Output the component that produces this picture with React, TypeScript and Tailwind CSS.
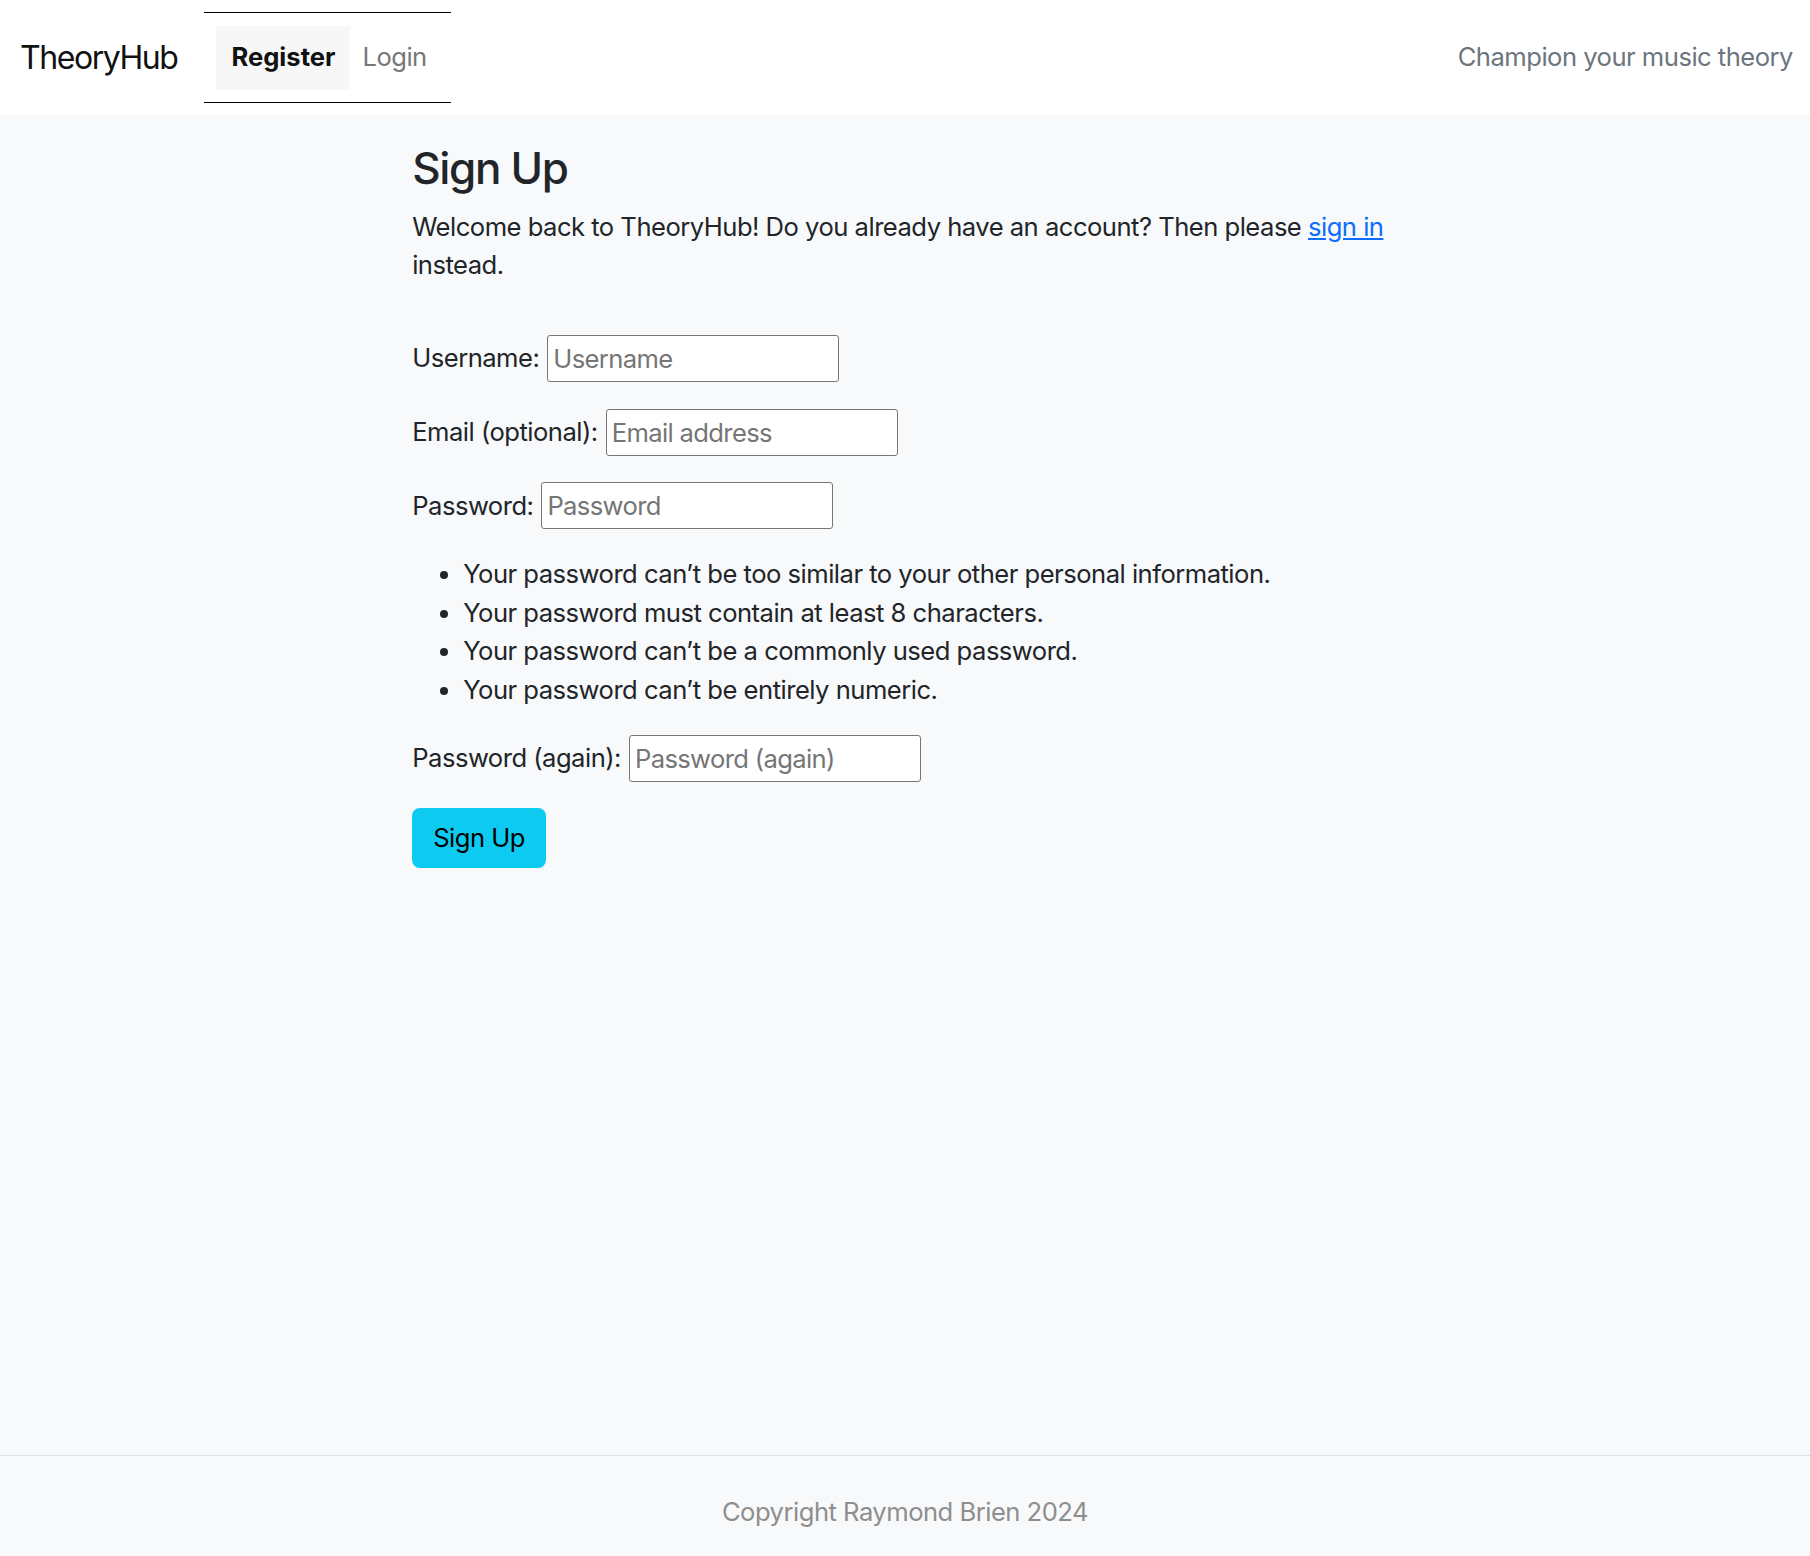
import { useState } from 'react';

const font = { fontFamily: 'Inter, "Noto Sans", sans-serif' };

function Field({ label, placeholder, type = 'text' }: { label: string; placeholder: string; type?: string }) {
  const [value, setValue] = useState('');
  return (
    <p className="mb-[25.6px] flex h-[48px] items-center gap-[8px]">
      <label className="text-[25.6px] leading-[38.4px] text-[#212529]">{label}</label>
      <input
        type={type}
        value={value}
        onChange={(e) => setValue(e.target.value)}
        placeholder={placeholder}
        className="h-[47px] w-[292px] rounded-[3px] border border-[#767676] bg-white px-[5px] text-[25.6px] tracking-[-0.025em] text-[#212529] outline-none placeholder:text-[#757575]"
      />
    </p>
  );
}

const rules = [
  'Your password can’t be too similar to your other personal information.',
  'Your password must contain at least 8 characters.',
  'Your password can’t be a commonly used password.',
  'Your password can’t be entirely numeric.',
];

export default function App() {
  return (
    <div className="flex min-h-screen flex-col bg-[#f8f9fa] tracking-[-0.032em] text-[#212529]" style={font}>
      <header className="flex h-[115px] items-center justify-between bg-white pl-[20px] pr-[17px]">
        <div className="flex items-center">
          <span className="mr-[27px] text-[32px] leading-[48px] tracking-[-0.045em] text-[#111]">TheoryHub</span>
          <nav className="flex h-[91px] items-center border-y border-black px-[12px]">
            <a className="flex h-[64px] items-center bg-[#f7f7f7] px-[15px] text-[25.6px] font-bold tracking-normal text-[#111]">
              Register
            </a>
            <a className="flex h-[64px] items-center px-[12px] text-[25.6px] text-[#777]">Login</a>
          </nav>
        </div>
        <span className="text-[25.6px] text-[#6c757d]">Champion your music theory</span>
      </header>

      <main className="flex-1">
        <div className="mx-auto w-[1536px] px-[19.2px] pt-[27px]">
          <div className="ml-[256px] w-[986px]">
            <h3 className="mb-[12.8px] text-[44px] font-medium leading-[53px] tracking-[-0.03em]">Sign Up</h3>
            <p className="mb-[50px] text-[25.6px] leading-[38.4px]">
              Welcome back to TheoryHub! Do you already have an account? Then please{' '}
              <a href="#" className="text-[#0d6efd] underline">
                sign in
              </a>{' '}
              instead.
            </p>
            <form onSubmit={(e) => e.preventDefault()}>
              <Field label="Username:" placeholder="Username" />
              <Field label="Email (optional):" placeholder="Email address" type="email" />
              <Field label="Password:" placeholder="Password" type="password" />
              <ul className="mb-[25.6px] list-disc pl-[51px] text-[25.6px] leading-[38.4px]">
                {rules.map((r) => (
                  <li key={r}>{r}</li>
                ))}
              </ul>
              <Field label="Password (again):" placeholder="Password (again)" type="password" />
              <button
                type="submit"
                className="h-[60px] rounded-[8px] bg-[#0dcaf0] px-[21px] text-[25.6px] leading-[38.4px] text-black"
              >
                Sign Up
              </button>
            </form>
          </div>
        </div>
      </main>

      <footer className="h-[101px] border-t border-[#dee2e6] bg-[#f8f9fa] pt-[37px] text-center">
        <span className="text-[25.6px] leading-[38px] text-[#8e8e8e]">Copyright Raymond Brien 2024</span>
      </footer>
    </div>
  );
}
